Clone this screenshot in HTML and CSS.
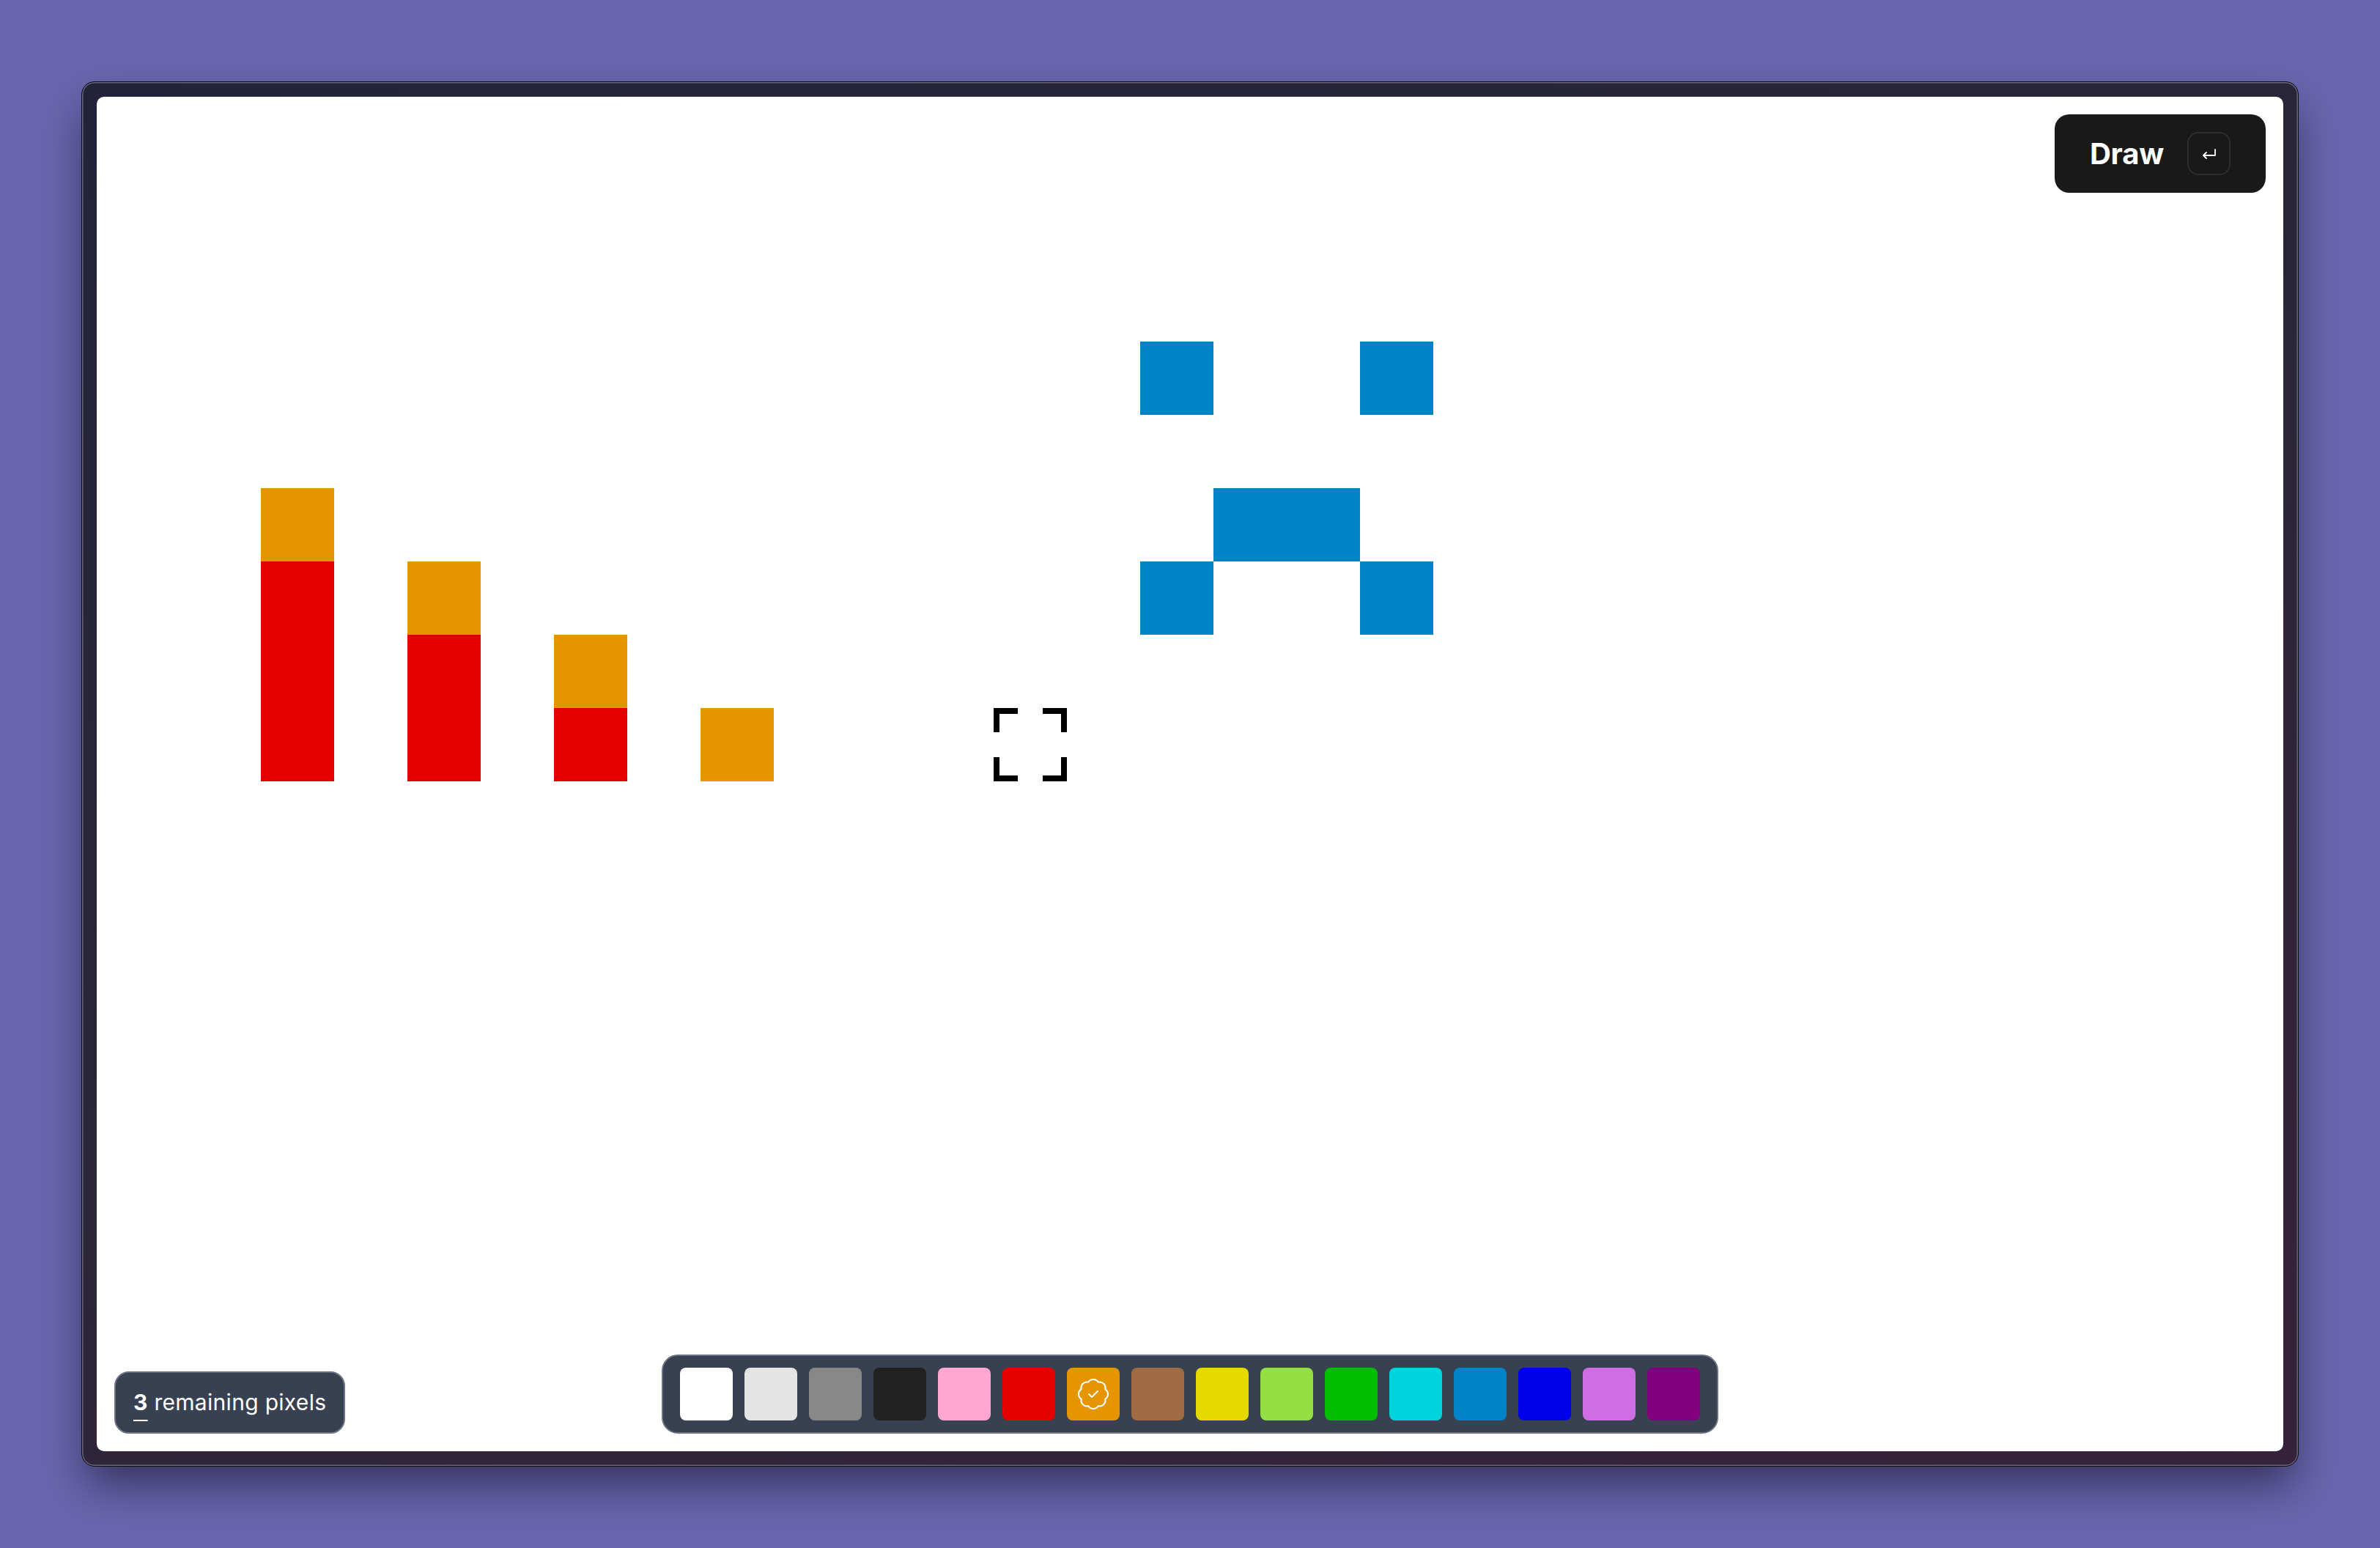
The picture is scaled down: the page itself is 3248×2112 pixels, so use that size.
FILE: index.html
```html
<!DOCTYPE html>
<html lang="en">
<head>
<meta charset="utf-8">
<title>Pixel canvas</title>
<link rel="stylesheet" href="styles.css">
</head>
<body>
<div class="frame">
  <main class="canvas">
    <div class="pixels">
      <div class="px orange" style="grid-column:1;grid-row:3"></div>
      <div class="px red" style="grid-column:1;grid-row:4"></div>
      <div class="px red" style="grid-column:1;grid-row:5"></div>
      <div class="px red" style="grid-column:1;grid-row:6"></div>
      <div class="px orange" style="grid-column:3;grid-row:4"></div>
      <div class="px red" style="grid-column:3;grid-row:5"></div>
      <div class="px red" style="grid-column:3;grid-row:6"></div>
      <div class="px orange" style="grid-column:5;grid-row:5"></div>
      <div class="px red" style="grid-column:5;grid-row:6"></div>
      <div class="px orange" style="grid-column:7;grid-row:6"></div>
      <div class="px cursor" style="grid-column:11;grid-row:6">
        <svg viewBox="0 0 100 100" width="100" height="100" fill="none" stroke="#000" stroke-width="8">
          <path d="M4 33V4H33"/>
          <path d="M67 4H96V33"/>
          <path d="M4 67V96H33"/>
          <path d="M67 96H96V67"/>
        </svg>
      </div>
      <div class="px blue" style="grid-column:13;grid-row:1"></div>
      <div class="px blue" style="grid-column:16;grid-row:1"></div>
      <div class="px blue" style="grid-column:14;grid-row:3"></div>
      <div class="px blue" style="grid-column:15;grid-row:3"></div>
      <div class="px blue" style="grid-column:13;grid-row:4"></div>
      <div class="px blue" style="grid-column:16;grid-row:4"></div>
    </div>

    <div class="topbar">
      <button class="draw-btn" type="button">
        <span class="draw-label">Draw</span>
        <span class="kbd">
          <svg viewBox="0 0 20 16" width="20" height="16" fill="none" stroke="#fff" stroke-width="1.8" stroke-linecap="round" stroke-linejoin="round">
            <path d="M18 2V10H2"/>
            <path d="M6 6L2 10L6 14"/>
          </svg>
        </span>
      </button>
    </div>

    <div class="bottombar">
      <div class="remaining"><span class="count">3</span> remaining pixels</div>
      <div class="palette">
        <span class="swatch" style="background:#ffffff"></span>
        <span class="swatch" style="background:#e4e4e4"></span>
        <span class="swatch" style="background:#888888"></span>
        <span class="swatch" style="background:#222222"></span>
        <span class="swatch" style="background:#ffa7d1"></span>
        <span class="swatch" style="background:#e50000"></span>
        <span class="swatch selected" style="background:#e59500">
          <svg viewBox="0 0 24 24" width="48" height="48" fill="none" stroke="#fff" stroke-width="1.05" stroke-linecap="round" stroke-linejoin="round">
            <path d="M3.85 8.62a4 4 0 0 1 4.78-4.77 4 4 0 0 1 6.74 0 4 4 0 0 1 4.78 4.78 4 4 0 0 1 0 6.74 4 4 0 0 1-4.77 4.78 4 4 0 0 1-6.75 0 4 4 0 0 1-4.78-4.77 4 4 0 0 1 0-6.76Z"/>
            <path d="m9 12 2 2 4-4"/>
          </svg>
        </span>
        <span class="swatch" style="background:#a06a42"></span>
        <span class="swatch" style="background:#e5d900"></span>
        <span class="swatch" style="background:#94e044"></span>
        <span class="swatch" style="background:#02be01"></span>
        <span class="swatch" style="background:#00d3dd"></span>
        <span class="swatch" style="background:#0083c7"></span>
        <span class="swatch" style="background:#0000ea"></span>
        <span class="swatch" style="background:#cf6ee4"></span>
        <span class="swatch" style="background:#820080"></span>
      </div>
      <div class="spacer"></div>
    </div>
  </main>
</div>
</body>
</html>
```

FILE: styles.css
```css
* { box-sizing: border-box; }

html, body {
  margin: 0;
  height: 100%;
}

body {
  background: #6a66ae;
  padding: 111px;
  font-family: Inter, "Noto Sans", "Liberation Sans", sans-serif;
  display: flex;
}

.frame {
  flex: 1;
  display: flex;
  padding: 20px;
  border: 1px solid #0c0b14;
  border-radius: 18px;
  background: linear-gradient(160deg, #22233a 0%, #2b2639 50%, #36223a 100%);
  box-shadow:
    inset 0 0 0 1.5px #6a6878,
    0 30px 60px -6px rgba(10, 8, 30, 0.55);
}

.canvas {
  flex: 1;
  position: relative;
  background: #ffffff;
  border-radius: 10px;
  overflow: hidden;
  display: flex;
  flex-direction: column;
  justify-content: space-between;
  padding: 24px 24px 24px 24px;
}

/* pixel grid drawn on the free canvas */
.pixels {
  position: absolute;
  left: 224px;
  top: 334px;
  display: grid;
  grid-template-columns: repeat(16, 100px);
  grid-template-rows: repeat(6, 100px);
}

.px { width: 100px; height: 100px; }
.orange { background: #e59500; }
.red { background: #e50000; }
.blue { background: #0083c7; }
.cursor svg { display: block; }

/* top bar */
.topbar {
  position: relative;
  display: flex;
  justify-content: flex-end;
}

.draw-btn {
  display: flex;
  align-items: center;
  gap: 32px;
  padding: 24px 48px 24px 48px;
  border: none;
  border-radius: 20px;
  background: #1a1919;
  color: #fff;
  font-family: Inter, "Noto Sans", sans-serif;
  cursor: pointer;
}

.draw-label {
  font-size: 40px;
  font-weight: 700;
  line-height: 49px;
  letter-spacing: -0.2px;
}

.kbd {
  width: 59px;
  height: 59px;
  border: 2px solid #2e2d2d;
  border-radius: 15px;
  display: flex;
  align-items: center;
  justify-content: center;
}

.kbd svg { display: block; }

/* bottom bar */
.bottombar {
  position: relative;
  display: grid;
  grid-template-columns: 1fr auto 1fr;
  align-items: end;
}

.remaining {
  justify-self: start;
  background: #374151;
  border: 2px solid #6b7280;
  border-radius: 20px;
  padding: 20px 24px;
  color: #fff;
  font-size: 30px;
  line-height: 41px;
  letter-spacing: 0.3px;
  white-space: nowrap;
}

.count {
  font-weight: 700;
  text-decoration: underline;
  text-decoration-thickness: 2px;
  text-underline-offset: 13px;
}

.palette {
  display: flex;
  gap: 16px;
  padding: 16px 23px;
  background: #374151;
  border: 2px solid #6b7280;
  border-radius: 22px;
}

.swatch {
  width: 72px;
  height: 72px;
  border-radius: 8px;
  display: flex;
  align-items: center;
  justify-content: center;
}

.swatch svg { display: block; }
```
